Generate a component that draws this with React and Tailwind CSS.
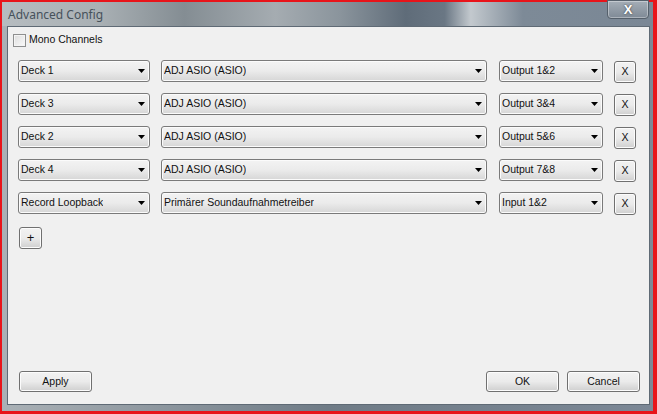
const rows = [
  { deck: 'Deck 1', device: 'ADJ ASIO (ASIO)', channel: 'Output 1&2' },
  { deck: 'Deck 3', device: 'ADJ ASIO (ASIO)', channel: 'Output 3&4' },
  { deck: 'Deck 2', device: 'ADJ ASIO (ASIO)', channel: 'Output 5&6' },
  { deck: 'Deck 4', device: 'ADJ ASIO (ASIO)', channel: 'Output 7&8' },
  { deck: 'Record Loopback', device: 'Primärer Soundaufnahmetreiber', channel: 'Input 1&2' },
];

const winFont = { fontFamily: '"Liberation Sans", Arial, sans-serif' };

const Combo = ({ value, className }) => (
  <div
    className={`h-[22px] flex items-center justify-between pl-[2px] pr-[4px] rounded-[3px] border border-[#7a7a7a] bg-gradient-to-b from-[#f3f3f3] via-[#ebebeb] to-[#d6d6d6] shadow-[inset_0_0_0_1px_#fbfbfb] text-[10.5px] text-[#111] ${className}`}
  >
    <span className="truncate">{value}</span>
    <svg width="7" height="4" viewBox="0 0 7 4" className="shrink-0">
      <path d="M0 0h7L3.5 4z" fill="#000" />
    </svg>
  </div>
);

const Button = ({ children, className }) => (
  <div
    className={`flex items-center justify-center rounded-[3px] border border-[#707070] bg-gradient-to-b from-[#f2f2f2] via-[#ebebeb] to-[#cfcfcf] shadow-[inset_0_0_0_1px_#fcfcfc] text-[10.5px] text-[#111] ${className}`}
  >
    {children}
  </div>
);

export default function App() {
  return (
    <div className="w-[657px] h-[414px] bg-[#e8141a] pt-[2px] pl-[2px] pr-[4px] pb-[3px]" style={winFont}>
      <div className="w-full h-full flex flex-col bg-gradient-to-r from-[#aab1b6] via-[#6f7b86] to-[#7c8896]">
        {/* title bar */}
        <div className="h-[24px] flex items-start justify-between bg-[linear-gradient(90deg,#b6bcc0_0%,#a9b0b4_15%,#848d93_28%,#a5acb1_42%,#8a949c_52%,#5f6c79_62%,#6a7784_68%,#c3c9ce_72%,#7d8a97_80%,#7a8795_100%)]">
          <span
            className="pl-[6px] pt-[4px] text-[12px] text-[#46515b]"
            style={{ fontFamily: '"Noto Sans", "Open Sans", sans-serif' }}
          >
            Advanced Config
          </span>
          <div className="mr-[4px] -mt-[2px] w-[42px] h-[19px] rounded-b-[4px] border border-[#55606b] bg-gradient-to-b from-[#a5aeb7] to-[#7f8a96] flex items-center justify-center shadow-[inset_0_0_0_1px_rgba(255,255,255,0.35)]">
            <span className="text-white font-bold text-[13px] leading-none [text-shadow:0_0_2px_#333]">X</span>
          </div>
        </div>
        {/* client area */}
        <div className="flex-1 ml-[5px] mr-[3px] mb-[6px] border border-[#5f6a75] bg-[#f0f0f0] flex flex-col">
          <div className="flex items-center pl-[5px] pt-[6px] h-[20px]">
            <div className="w-[13px] h-[13px] border border-[#8e8f8f] bg-gradient-to-br from-[#dcdcdc] to-[#fbfbfb] shadow-[inset_0_0_0_1px_#f4f4f4]" />
            <span className="ml-[3px] text-[10.5px] text-[#111]">Mono Channels</span>
          </div>
          <div className="flex flex-col gap-[11px] pl-[10px] mt-[13px]">
            {rows.map((r) => (
              <div key={r.deck} className="flex items-start h-[22px]">
                <Combo value={r.deck} className="w-[132px]" />
                <Combo value={r.device} className="w-[326px] ml-[11px]" />
                <Combo value={r.channel} className="w-[104px] ml-[12px]" />
                <Button className="w-[22px] h-[22px] ml-[11px] mt-[1px]">X</Button>
              </div>
            ))}
          </div>
          <div className="pl-[11px] mt-[13px]">
            <Button className="w-[23px] h-[22px] text-[13px]">+</Button>
          </div>
          <div className="flex-1" />
          <div className="flex items-center pl-[11px] pr-[9px] pb-[12px]">
            <Button className="w-[73px] h-[21px]">Apply</Button>
            <div className="flex-1" />
            <Button className="w-[73px] h-[21px]">OK</Button>
            <Button className="w-[73px] h-[21px] ml-[8px]">Cancel</Button>
          </div>
        </div>
      </div>
    </div>
  );
}
